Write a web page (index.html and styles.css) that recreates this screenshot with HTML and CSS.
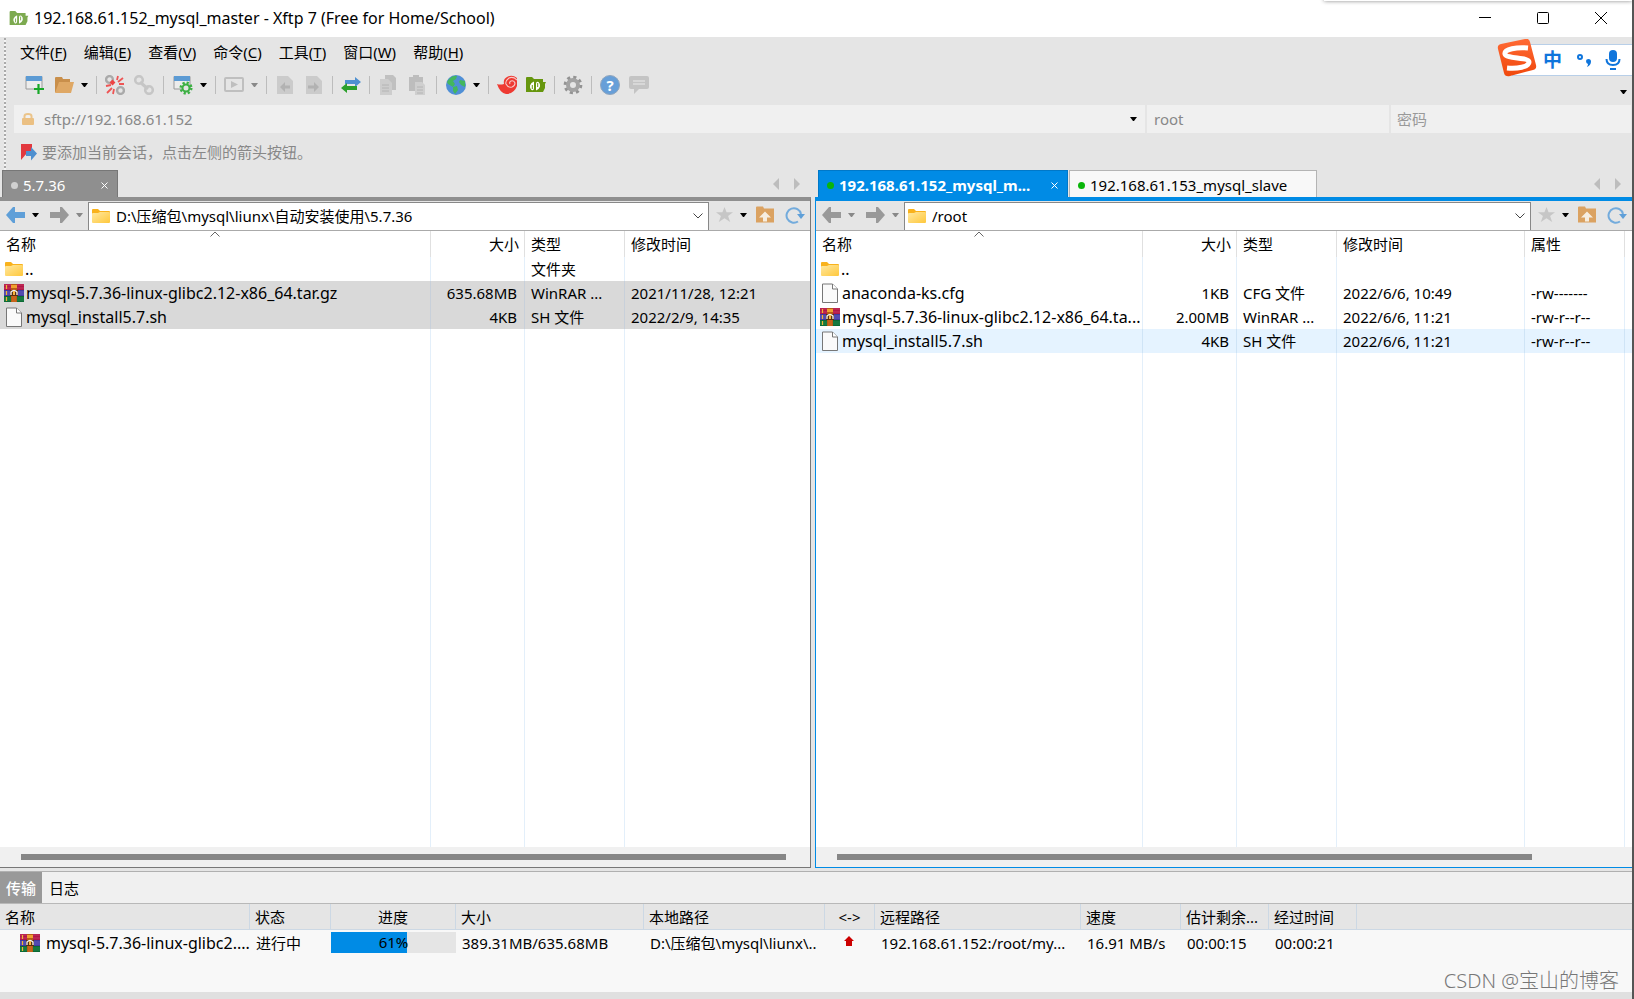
FILE: index.html
```html
<!DOCTYPE html>
<html lang="zh-CN">
<head>
<meta charset="utf-8">
<title>192.168.61.152_mysql_master - Xftp 7</title>
<link rel="stylesheet" href="styles.css">
</head>
<body>
<svg class="sprite" aria-hidden="true">
  <defs>
    <linearGradient id="gFolder" x1="0" y1="0" x2="1" y2="1"><stop offset="0" stop-color="#ffe8a0"/><stop offset="1" stop-color="#ffc83c"/></linearGradient>
    <linearGradient id="gOrange" x1="0" y1="0" x2="0" y2="1"><stop offset="0" stop-color="#ff6a35"/><stop offset="1" stop-color="#f0480c"/></linearGradient>
  </defs>
  <symbol id="caret" viewBox="0 0 7 4"><path d="M0 0h7L4 4H3z" fill="currentColor"/></symbol>
  <symbol id="folder" viewBox="0 0 18 14"><path d="M0 1q0-1 1-1h5l2 2h9q1 0 1 1v3H0z" fill="#f9b21c"/><path d="M0 5q0-1 1-1h5l2-1h9q1 0 1 1v9q0 1-1 1H1q-1 0-1-1z" fill="url(#gFolder)"/></symbol>
  <symbol id="file" viewBox="0 0 16 20"><path d="M.5 1h10l5 5v13.500H.5z" fill="#fafafa" stroke="#777"/><path d="M10.500 1v5h5" fill="#fff" stroke="#777"/></symbol>
  <symbol id="rar" viewBox="0 0 20 18">
    <rect width="20" height="6" fill="#b01848"/><rect y="6" width="20" height="6" fill="#4038a0"/><rect y="12" width="20" height="6" fill="#0c6a34"/>
    <path d="M0 1h20M0 4h20" stroke="#d84a70" stroke-width=".6"/><path d="M0 8h20M0 10h20" stroke="#7c78d8" stroke-width=".6"/><path d="M0 14h20M0 16h20" stroke="#2fa060" stroke-width=".6"/>
    <path d="M2.500 1v4M2.500 7v4M2.500 13v4" stroke="#f2b632" stroke-width="1.200"/>
    <path d="M7 0h6v18H7z" fill="#b85c14"/><path d="M7 1h6v3H7z" fill="#f0a030"/><path d="M8 12h4v6H8z" fill="#c8641c"/>
    <path d="M6 6h8v6H6z" fill="#5a3010"/><path d="M7 11V8q3-3 6 0v3" fill="none" stroke="#f4f4f4" stroke-width="1.300"/><path d="M9 7h2v4H9z" fill="#f8b840"/>
  </symbol>
  <symbol id="xftp" viewBox="0 0 20 16"><path d="M0 1q0-1 1-1h5l2 2h9v3h3l-1 2v4l-2 4H0z" fill="currentColor"/><path d="M8 4.500v6.500q0 3-2.500 2Q3.500 11 4 8.500 5 5.500 8 4.500zM10 13.500V7q0-3 2.500-2 2 1.500 1.500 4.500-1 3-4 4z" fill="#fff"/><path d="M6.300 8v4M11.700 6v4" stroke="currentColor"/></symbol>
  <symbol id="new" viewBox="0 0 20 20"><path d="M1 1.500h16V14H1z" fill="#ececec" stroke="#999"/><path d="M1 1h16v5H1z" fill="#5c9bd4"/><path d="M13.500 9v10M9 14h10" stroke="#18a828" stroke-width="2.200"/></symbol>
  <symbol id="open" viewBox="0 0 20 18"><path d="M1 2q0-1 1-1h6l1 2h7v3H6L3 16H1z" fill="#c98f4b"/><path d="M5 6h15l-3 11H1z" fill="#dfa865"/></symbol>
  <symbol id="link" viewBox="0 0 20 20"><circle cx="5" cy="5" r="3.800" fill="none" stroke="currentColor" stroke-width="2.600"/><circle cx="15" cy="15" r="3.800" fill="none" stroke="currentColor" stroke-width="2.600"/><path d="M6 7l8 7" stroke="currentColor" stroke-width="3"/></symbol>
  <symbol id="unlink" viewBox="0 0 20 20"><circle cx="4.500" cy="4.500" r="3.400" fill="none" stroke="#aaa" stroke-width="2.400"/><circle cx="15.500" cy="15.500" r="3.400" fill="none" stroke="#aaa" stroke-width="2.400"/><path d="M6 6l3 3" stroke="#e44" stroke-width="4"/><path d="M13 1l-1 4M18 3l-5 4M14 9h5M1 11l5-1M7 13l-5 5M9 14l-1 5" stroke="#ee5555" stroke-width="1.800"/></symbol>
  <symbol id="props" viewBox="0 0 20 20"><path d="M1 1.500h16V14H1z" fill="#ececec" stroke="#999"/><path d="M1 1h16v5H1z" fill="#5c9bd4"/><circle cx="13" cy="13" r="5.300" fill="none" stroke="#3cb043" stroke-width="2.500" stroke-dasharray="2.200 1.960"/><circle cx="13" cy="13" r="3.500" fill="#e5e5e5" stroke="#3cb043" stroke-width="2"/></symbol>
  <symbol id="play" viewBox="0 0 20 16"><rect x="1" y="1" width="18" height="13" rx="1" fill="none" stroke="#bfbfbf" stroke-width="2"/><path d="M7 4l7 3.500L7 11z" fill="#bfbfbf"/></symbol>
  <symbol id="docleft" viewBox="0 0 20 20"><path d="M2 1h11l5 5v13H2z" fill="#cbcbcb"/><path d="M10 7v3.500h5v3h-5V17l-5-5z" fill="#b2b2b2"/></symbol>
  <symbol id="docright" viewBox="0 0 20 20"><path d="M2 1h11l5 5v13H2z" fill="#cbcbcb"/><path d="M10 7v3.500H4v3h6V17l5-5z" fill="#b2b2b2"/></symbol>
  <symbol id="swap" viewBox="0 0 20 16"><path d="M4 3h10V0l6 5-6 5V7H4z" fill="#4f90d0"/><path d="M16 9H6V6l-6 5 6 5v-3h10z" fill="#2ba02b"/></symbol>
  <symbol id="copy" viewBox="0 0 20 20"><path d="M7 0h8l3 3v12H7z" fill="#c0c0c0"/><path d="M2 4h8l4 4v12H2z" fill="#cdcdcd"/><path d="M4 10h7M4 13h7M4 16h7" stroke="#b4b4b4"/></symbol>
  <symbol id="paste" viewBox="0 0 20 20"><path d="M2 2h4V0h6v2h4v14H2z" fill="#bdbdbd"/><path d="M8 7h7l3 3v10H8z" fill="#cfcfcf"/><path d="M10 12h6M10 15h6M10 18h6" stroke="#b4b4b4"/></symbol>
  <symbol id="globe" viewBox="0 0 20 20"><circle cx="10" cy="10" r="10" fill="#4f8fd6"/><path d="M3 4q4-4 8-3l-1 3-3 2 2 3-2 3-5-3-1-2zM14 5l5 1v6l-4-2-2-3zM7 12l4-1 1 4-3 4-2-3z" fill="#43b75e"/></symbol>
  <symbol id="swirl" viewBox="0 0 20 20"><path d="M0 9q3 1 7 0-1-5 3-7 5-3 10 1v8q-3 8-11 8-6-1-9-10z" fill="#ee3a32"/><path d="M20 5q-4-4-8-2-4 3-3 6 2 4 6 3 3-1 3-4-1-3-4-2-2 1-1 3" fill="none" stroke="#f6c9c6" stroke-width="1.100"/></symbol>
  <symbol id="gear" viewBox="0 0 20 20"><circle cx="10" cy="10" r="7.600" fill="none" stroke="#939393" stroke-width="3.500" stroke-dasharray="3 2.970"/><circle cx="10" cy="10" r="5" fill="none" stroke="#a3a3a3" stroke-width="4"/></symbol>
  <symbol id="chat" viewBox="0 0 20 20"><path d="M2 1h16q2 0 2 2v9q0 2-2 2h-8l-5 5v-5H2q-2 0-2-2V3q0-2 2-2z" fill="#c4c4c4"/><path d="M4 6h12M4 9h12" stroke="#dedede" stroke-width="1.500"/></symbol>
  <symbol id="lock" viewBox="0 0 12 12"><path d="M2.500 6V3q0-2 3.500-2t3.500 2v3" fill="none" stroke="#ebc48a" stroke-width="2"/><rect y="5" width="12" height="7" rx="1" fill="#ebc083"/></symbol>
  <symbol id="flag" viewBox="0 0 16 17"><path d="M0 0h11v11l-5-2-6 7z" fill="#e2393f"/><path d="M5 7h5V3l6 6.500-6 7V12H5z" fill="#4f90d0"/></symbol>
  <symbol id="back" viewBox="0 0 19 16"><path d="M9 0v5h10v6H9v5H7L0 8l7-8z" fill="currentColor"/></symbol>
  <symbol id="forward" viewBox="0 0 19 16"><path d="M10 0v5H0v6h10v5h2l7-8-7-8z" fill="currentColor"/></symbol>
  <symbol id="star" viewBox="0 0 18 16"><path d="M9 0l2.200 5.500H18L12.800 9.500 15 16 9 12l-6 4 2.200-6.500L0 5.500h6.800z" fill="#c6c6c6"/></symbol>
  <symbol id="upfolder" viewBox="0 0 18 16"><path d="M0 1q0-1 1-1h6l1 2h10v14H0z" fill="#dba261"/><path d="M9 5l6 6h-4v4H7v-4H3z" fill="#f6ede0"/></symbol>
  <symbol id="refresh" viewBox="0 0 20 18"><path d="M13 15.500A7.300 7.300 0 1 1 16 8" fill="none" stroke="#73abdc" stroke-width="2"/><path d="M12 8h8l-4 5z" fill="#5f9fd8"/></symbol>
  <symbol id="chevdown" viewBox="0 0 10 6"><path d="M.5.5L5 5 9.500.5" fill="none" stroke="#444"/></symbol>
  <symbol id="chevup" viewBox="0 0 10 6"><path d="M.5 5.500L5 1l4.500 4.500" fill="none" stroke="#666"/></symbol>
  <symbol id="cross" viewBox="0 0 7 7"><path d="M.5.500l6 6M6.500.5l-6 6" stroke="#fff"/></symbol>
  <symbol id="prev" viewBox="0 0 6 12"><path d="M6 0v12L0 6z" fill="#bdbdbd"/></symbol>
  <symbol id="next" viewBox="0 0 6 12"><path d="M0 0v12l6-6z" fill="#bdbdbd"/></symbol>
  <symbol id="upload" viewBox="0 0 10 10"><path d="M5 0l5 5H8v5H2V5H0z" fill="#cc0000"/></symbol>
  <symbol id="sogou" viewBox="0 0 40 38"><path d="M4 5L28 0q4-1 5 3l6 23q1 4-3 5L13 37q-5 1-6-3L1 10q-1-4 3-5z" fill="url(#gOrange)"/><path d="M31 9C20 8 7 10 8 15c1 5 24 3 24 8 0 5-12 7-22 6" fill="none" stroke="#fff" stroke-width="5"/></symbol>
  <symbol id="punct" viewBox="0 0 14 14"><circle cx="3" cy="4" r="2" fill="none" stroke="#0f75dc" stroke-width="2"/><path d="M9 8q0-2 2.500-2T14 8.500Q14 12 10 14q1-2 1-3-2-.5-2-3z" fill="#0f75dc"/></symbol>
  <symbol id="mic" viewBox="0 0 16 20"><rect x="4" width="8" height="12" rx="4" fill="#0f75dc"/><path d="M1.500 9q0 6 6.500 6t6.500-6M5 19h6" fill="none" stroke="#0f75dc" stroke-width="2"/></symbol>
</svg>

<div class="app">
  <header class="titlebar">
    <svg class="app-icon"><use href="#xftp"/></svg>
    <h1 class="title">192.168.61.152_mysql_master - Xftp 7 (Free for Home/School)</h1>
    <div class="win-buttons">
      <button class="win-btn" aria-label="最小化"><svg viewBox="0 0 12 12"><path d="M0 5.500h12" stroke="#000"/></svg></button>
      <button class="win-btn" aria-label="最大化"><svg viewBox="0 0 12 12"><rect x=".5" y=".5" width="11" height="11" rx="1" fill="none" stroke="#000"/></svg></button>
      <button class="win-btn" aria-label="关闭"><svg viewBox="0 0 12 12"><path d="M0 0l12 12M12 0L0 12" stroke="#000"/></svg></button>
    </div>
  </header>

  <section class="command-area">
    <div class="grip"></div>
    <div class="command-rows">
      <nav class="menu">
        <button>文件(<u>F</u>)</button><button>编辑(<u>E</u>)</button><button>查看(<u>V</u>)</button><button>命令(<u>C</u>)</button><button>工具(<u>T</u>)</button><button>窗口(<u>W</u>)</button><button>帮助(<u>H</u>)</button>
      </nav>
      <div class="toolbar">
        <button class="tool" aria-label="新建"><svg><use href="#new"/></svg></button>
        <button class="tool" aria-label="打开"><svg><use href="#open"/></svg></button>
        <button class="drop" aria-label="打开列表"><svg><use href="#caret"/></svg></button>
        <i class="sep"></i>
        <button class="tool" aria-label="断开"><svg><use href="#unlink"/></svg></button>
        <button class="tool pale" aria-label="重新连接"><svg><use href="#link"/></svg></button>
        <i class="sep wide"></i>
        <button class="tool" aria-label="属性"><svg><use href="#props"/></svg></button>
        <button class="drop" aria-label="属性列表"><svg><use href="#caret"/></svg></button>
        <i class="sep"></i>
        <button class="tool" aria-label="运行"><svg><use href="#play"/></svg></button>
        <button class="drop dim" aria-label="运行列表"><svg><use href="#caret"/></svg></button>
        <i class="sep"></i>
        <button class="tool" aria-label="向左传输"><svg><use href="#docleft"/></svg></button>
        <button class="tool" aria-label="向右传输"><svg><use href="#docright"/></svg></button>
        <i class="sep"></i>
        <button class="tool" aria-label="同步"><svg><use href="#swap"/></svg></button>
        <i class="sep"></i>
        <button class="tool" aria-label="复制"><svg><use href="#copy"/></svg></button>
        <button class="tool" aria-label="粘贴"><svg><use href="#paste"/></svg></button>
        <i class="sep wide"></i>
        <button class="tool" aria-label="编码"><svg><use href="#globe"/></svg></button>
        <button class="drop" aria-label="编码列表"><svg><use href="#caret"/></svg></button>
        <i class="sep"></i>
        <button class="tool" aria-label="Xshell"><svg><use href="#swirl"/></svg></button>
        <button class="tool green" aria-label="Xftp"><svg><use href="#xftp"/></svg></button>
        <i class="sep"></i>
        <button class="tool" aria-label="选项"><svg><use href="#gear"/></svg></button>
        <i class="sep"></i>
        <button class="tool help" aria-label="帮助">?</button>
        <button class="tool" aria-label="反馈"><svg><use href="#chat"/></svg></button>
        <button class="drop last" aria-label="更多"><svg><use href="#caret"/></svg></button>
      </div>
      <div class="address">
        <div class="field host">
          <svg class="lock"><use href="#lock"/></svg>
          <input type="text" aria-label="主机" value="sftp://192.168.61.152">
          <button class="drop" aria-label="主机列表"><svg><use href="#caret"/></svg></button>
        </div>
        <div class="field user"><input type="text" aria-label="用户名" value="root"></div>
        <div class="field pass"><input type="password" aria-label="密码" placeholder="密码"></div>
      </div>
      <div class="hint"><svg class="flag"><use href="#flag"/></svg><span>要添加当前会话，点击左侧的箭头按钮。</span></div>
    </div>
  </section>

  <main class="panes">
    <section class="pane local">
      <div class="tabs">
        <button class="tab current"><i class="dot"></i><span class="tab-name">5.7.36</span><svg class="close"><use href="#cross"/></svg></button>
        <div class="tab-nav"><button aria-label="上一个"><svg><use href="#prev"/></svg></button><button aria-label="下一个"><svg><use href="#next"/></svg></button></div>
      </div>
      <div class="pane-body">
        <div class="pathbar">
          <button class="nav blue" aria-label="后退"><svg><use href="#back"/></svg></button><button class="drop" aria-label="后退列表"><svg><use href="#caret"/></svg></button>
          <button class="nav fwd" aria-label="前进"><svg><use href="#forward"/></svg></button><button class="drop dim" aria-label="前进列表"><svg><use href="#caret"/></svg></button>
          <div class="path"><svg class="folder"><use href="#folder"/></svg><input type="text" aria-label="本地路径" value="D:\压缩包\mysql\liunx\自动安装使用\5.7.36"><button aria-label="路径列表"><svg class="chev"><use href="#chevdown"/></svg></button></div>
          <button class="side star" aria-label="收藏"><svg><use href="#star"/></svg></button><button class="drop" aria-label="收藏列表"><svg><use href="#caret"/></svg></button>
          <button class="side up" aria-label="上级目录"><svg><use href="#upfolder"/></svg></button>
          <button class="side refresh" aria-label="刷新"><svg><use href="#refresh"/></svg></button>
        </div>
        <div class="list">
          <table class="files">
            <colgroup><col class="w-name-local"><col class="w-size"><col class="w-type"><col></colgroup>
            <thead><tr><th>名称<svg class="sort"><use href="#chevup"/></svg></th><th class="num">大小</th><th>类型</th><th>修改时间</th></tr></thead>
            <tbody>
              <tr><td><div class="name"><svg class="folder"><use href="#folder"/></svg>..</div></td><td></td><td>文件夹</td><td></td></tr>
              <tr class="selected"><td><div class="name"><svg class="rar"><use href="#rar"/></svg>mysql-5.7.36-linux-glibc2.12-x86_64.tar.gz</div></td><td class="num">635.68MB</td><td>WinRAR ...</td><td>2021/11/28, 12:21</td></tr>
              <tr class="selected"><td><div class="name"><svg class="file"><use href="#file"/></svg>mysql_install5.7.sh</div></td><td class="num">4KB</td><td>SH 文件</td><td>2022/2/9, 14:35</td></tr>
              <tr class="rest"><td></td><td></td><td></td><td></td></tr>
            </tbody>
          </table>
        </div>
        <div class="scroll"><div class="thumb"></div></div>
      </div>
    </section>

    <section class="pane remote">
      <div class="tabs">
        <button class="tab current"><i class="dot"></i><span class="tab-name">192.168.61.152_mysql_m...</span><svg class="close"><use href="#cross"/></svg></button>
        <button class="tab"><i class="dot"></i><span class="tab-name">192.168.61.153_mysql_slave</span></button>
        <div class="tab-nav"><button aria-label="上一个"><svg><use href="#prev"/></svg></button><button aria-label="下一个"><svg><use href="#next"/></svg></button></div>
      </div>
      <div class="pane-body">
        <div class="pathbar">
          <button class="nav" aria-label="后退"><svg><use href="#back"/></svg></button><button class="drop dim" aria-label="后退列表"><svg><use href="#caret"/></svg></button>
          <button class="nav fwd" aria-label="前进"><svg><use href="#forward"/></svg></button><button class="drop dim" aria-label="前进列表"><svg><use href="#caret"/></svg></button>
          <div class="path"><svg class="folder"><use href="#folder"/></svg><input type="text" aria-label="远程路径" value="/root"><button aria-label="路径列表"><svg class="chev"><use href="#chevdown"/></svg></button></div>
          <button class="side star" aria-label="收藏"><svg><use href="#star"/></svg></button><button class="drop" aria-label="收藏列表"><svg><use href="#caret"/></svg></button>
          <button class="side up" aria-label="上级目录"><svg><use href="#upfolder"/></svg></button>
          <button class="side refresh" aria-label="刷新"><svg><use href="#refresh"/></svg></button>
        </div>
        <div class="list">
          <table class="files">
            <colgroup><col class="w-name-remote"><col class="w-size"><col class="w-type"><col class="w-time"><col class="w-type"><col></colgroup>
            <thead><tr><th>名称<svg class="sort"><use href="#chevup"/></svg></th><th class="num">大小</th><th>类型</th><th>修改时间</th><th>属性</th><th></th></tr></thead>
            <tbody>
              <tr><td><div class="name"><svg class="folder"><use href="#folder"/></svg>..</div></td><td></td><td></td><td></td><td></td><td></td></tr>
              <tr><td><div class="name"><svg class="file"><use href="#file"/></svg>anaconda-ks.cfg</div></td><td class="num">1KB</td><td>CFG 文件</td><td>2022/6/6, 10:49</td><td>-rw-------</td><td></td></tr>
              <tr><td><div class="name"><svg class="rar"><use href="#rar"/></svg>mysql-5.7.36-linux-glibc2.12-x86_64.ta...</div></td><td class="num">2.00MB</td><td>WinRAR ...</td><td>2022/6/6, 11:21</td><td>-rw-r--r--</td><td></td></tr>
              <tr class="hover"><td><div class="name"><svg class="file"><use href="#file"/></svg>mysql_install5.7.sh</div></td><td class="num">4KB</td><td>SH 文件</td><td>2022/6/6, 11:21</td><td>-rw-r--r--</td><td></td></tr>
              <tr class="rest"><td></td><td></td><td></td><td></td><td></td><td></td></tr>
            </tbody>
          </table>
        </div>
        <div class="scroll"><div class="thumb"></div></div>
      </div>
    </section>
  </main>

  <section class="transfers">
    <div class="dock-tabs"><button class="dock-tab current">传输</button><button class="dock-tab">日志</button></div>
    <table class="queue">
      <colgroup><col class="q-name"><col class="q-state"><col class="q-progress"><col class="q-size"><col class="q-local"><col class="q-dir"><col class="q-remote"><col class="q-speed"><col class="q-left"><col class="q-left"><col></colgroup>
      <thead><tr><th>名称</th><th>状态</th><th class="mid">进度</th><th>大小</th><th>本地路径</th><th class="mid">&lt;-&gt;</th><th>远程路径</th><th>速度</th><th>估计剩余...</th><th>经过时间</th><th class="end"></th></tr></thead>
      <tbody><tr>
        <td><div class="name job"><svg class="rar"><use href="#rar"/></svg>mysql-5.7.36-linux-glibc2....</div></td>
        <td>进行中</td>
        <td class="bar-cell"><div class="bar"><div class="fill" style="width:61%"></div><span class="percent">61%</span></div></td>
        <td>389.31MB/635.68MB</td><td>D:\压缩包\mysql\liunx\..</td>
        <td class="mid"><svg class="upload"><use href="#upload"/></svg></td>
        <td>192.168.61.152:/root/my...</td><td>16.91 MB/s</td><td>00:00:15</td><td>00:00:21</td><td></td>
      </tr></tbody>
    </table>
  </section>
  <footer class="status"></footer>

  <div class="top-shade"></div>
  <div class="ime"><svg class="sogou"><use href="#sogou"/></svg><span class="lang">中</span><svg class="punct"><use href="#punct"/></svg><svg class="mic"><use href="#mic"/></svg></div>
  <div class="watermark">CSDN @宝山的博客</div>
</div>
</body>
</html>
```
FILE: styles.css
```css
* { box-sizing: border-box; }
body, button, input, table {
  font-family: "Noto Sans", "Noto Sans CJK SC", sans-serif;
  font-size: 15px;
  line-height: 20px;
  color: #000;
}
body { margin: 0; overflow: hidden; }
button { border: 0; padding: 0; background: none; display: flex; align-items: center; flex: none; }
input { border: 0; padding: 0; background: none; min-width: 0; outline: none; }
svg { display: block; flex: none; }
.sprite { position: absolute; width: 0; height: 0; }

.app {
  position: relative;
  display: flex;
  flex-direction: column;
  height: 100vh;
  background: #e5e5e5;
  border-right: 2px solid #555;
  overflow: hidden;
}

/* title bar */
.titlebar { display: flex; align-items: center; height: 37px; flex: none; padding: 0 2px 1px 9px; background: #fff; }
.app-icon { width: 20px; height: 15px; color: #7daa50; }
.title { margin: 0 0 0 5px; font-size: 16px; font-weight: 400; flex: 1; }
.win-buttons { display: flex; }
.win-btn { width: 58px; height: 36px; justify-content: center; }
.win-btn svg { width: 12px; height: 12px; }

/* menu, tools, address */
.command-area { display: flex; height: 133px; flex: none; }
.grip { width: 2px; margin: 1px 8px 0 4px; background: repeating-linear-gradient(#aaa 0 2px, #f4f4f4 2px 4px); }
.command-rows { flex: 1; min-width: 0; }
.menu { display: flex; gap: 17px; height: 32px; padding: 0 0 2px 6px; }
.menu u { text-underline-offset: 2px; }
.toolbar { display: flex; align-items: center; height: 32px; padding-left: 11px; }
.tool svg { width: 20px; height: 20px; }
.tool + .tool { margin-left: 9px; }
.tool.pale { color: #c6c6c6; }
.tool.green { color: #66960e; }
.tool.green svg { height: 16px; }
.tool.help { width: 20px; height: 20px; justify-content: center; border-radius: 50%; background: #679fd8; border: 1px solid #8fa5bd; color: #fff; font-weight: 700; }
.drop { margin-left: 7px; }
.drop svg { width: 7px; height: 4px; }
.drop.dim { color: #888; }
.drop.last { margin: 14px 5px 0 auto; }
.sep { width: 1px; height: 18px; margin: 0 8px; background: #bcbcbc; }
.sep.wide { margin: 0 9px; }
.address { display: flex; gap: 2px; height: 28px; margin-top: 4px; padding-right: 1px; }
.field { display: flex; align-items: center; background: #f0f0f0; }
.field input { flex: 1; color: #888; }
.field input::placeholder { color: #999; opacity: 1; }
.host { flex: 1115; padding: 0 8px; }
.host input { margin-left: 10px; }
.lock { width: 12px; height: 12px; }
.user { flex: 235; padding-left: 7px; }
.pass { flex: 234; padding-left: 6px; }
.hint { display: flex; align-items: center; gap: 5px; height: 38px; padding-left: 7px; color: #888; }
.flag { width: 16px; height: 17px; }

/* file panes */
.panes { display: flex; flex: 1; min-height: 0; }
.pane { display: flex; flex-direction: column; min-width: 0; }
.local { flex: 811; margin-right: 4px; }
.remote { flex: 817; }
.tabs { display: flex; height: 27px; flex: none; padding-left: 2px; }
.remote .tabs { padding-left: 3px; gap: 1px; }
.tab { height: 27px; padding: 2px 9px 0 8px; background: #f8f8f8; border: 1px solid #b4b4b4; border-bottom: 0; }
.local .tab { width: 116px; background: #8f8f8f; border-color: #777; }
.remote .tab { width: 248px; }
.remote .tab.current { width: 250px; background: #008be5; border-color: #0078c8; }
.tab-name { margin-left: 5px; }
.tab.current .tab-name { color: #fff; }
.remote .current .tab-name { font-weight: 700; }
.dot { width: 7px; height: 7px; border-radius: 50%; background: #0ab50a; }
.local .dot { background: #d0d0d0; }
.close { width: 7px; height: 7px; margin-left: auto; }
.tab-nav { display: flex; gap: 15px; margin-left: auto; padding-right: 11px; }
.tab-nav svg { width: 6px; height: 12px; }
.pane-body { display: flex; flex-direction: column; flex: 1; min-height: 0; background: #fff; }
.local .pane-body { border: 1px solid #777; border-top: 4px solid #8f8f8f; border-left: 0; }
.remote .pane-body { border: 1px solid #008be5; border-top-width: 4px; border-right: 0; }
.pathbar { display: flex; align-items: center; height: 30px; flex: none; padding: 0 5px 2px 6px; background: #e5e5e5; border-bottom: 1px solid #aaa; }
.nav { color: #999; }
.nav.blue { color: #5f9fd8; }
.nav.fwd { margin-left: 11px; }
.nav svg { width: 19px; height: 16px; }
.path { display: flex; align-items: center; flex: 1; min-width: 0; height: 28px; margin: 2px 7px 0 5px; padding: 0 5px 0 3px; background: #fff; border: 1px solid #888; border-bottom: 0; }
.path input { flex: 1; margin: 0 6px; }
.chev { width: 10px; height: 6px; }
.folder { width: 18px; height: 14px; }
.side svg { width: 18px; height: 17px; }
.side.star svg { width: 17px; }
.side.refresh svg { width: 20px; height: 18px; }
.side.up { margin: 0 11px 0 9px; }

.list { flex: 1; min-height: 0; }
table { border-collapse: separate; border-spacing: 0; table-layout: fixed; width: 100%; }
th, td { padding: 0; text-align: left; font-weight: 400; white-space: nowrap; overflow: hidden; }
.files { height: 100%; }
.files th { position: relative; height: 26px; padding: 0 6px; border-right: 1px solid #e0e0e0; }
.files td { height: 24px; padding: 0 6px; border-right: 1px solid #e3effa; }
.files th:last-child, .files td:last-child { border-right: 0; }
.files td:first-child { padding-left: 3px; }
.files th.num { padding-right: 5px; text-align: right; }
.files td.num { padding-right: 7px; text-align: right; }
.files .rest td { height: auto; }
.selected td { background: #d9d9d9; border-right-color: #c8d0da; }
.hover td { background: #e5f3ff; border-right-color: #cfe4f6; }
.w-name-local { width: 431px; }
.w-name-remote { width: 327px; }
.w-size { width: 94px; }
.w-type { width: 100px; }
.w-time { width: 188px; }
.sort { position: absolute; top: 0; left: 50%; width: 10px; height: 6px; margin-left: -5px; }
.name { display: flex; align-items: center; gap: 2px; font-size: 16px; }
.rar { width: 20px; height: 18px; }
.files .rar { margin-left: 1px; }
.file { width: 16px; height: 20px; margin: 0 2px 0 3px; }
.files .folder { margin-left: 2px; }
.scroll { height: 20px; flex: none; padding: 7px 24px 7px 21px; background: #f0f0f0; }
.remote .scroll { padding-right: 100px; }
.thumb { height: 6px; background: #868686; }

/* transfer queue */
.transfers { flex: none; height: 121px; margin-top: 3px; background: #f8f8f8; border-top: 1px solid #b0b0b0; }
.dock-tabs { display: flex; height: 32px; background: #f0f0f0; border-bottom: 1px solid #b8b8b8; }
.dock-tab { padding: 0 6px; }
.dock-tab + .dock-tab { padding-left: 7px; }
.dock-tab.current { background: #999; color: #fff; font-weight: 500; }
.queue th { height: 26px; padding: 0 5px; background: #e5e5e5; border-right: 1px solid #ccd8e4; border-bottom: 1px solid #ccd8e4; }
.queue td { height: 25px; padding: 0 6px; }
.queue th.end { border-right: 0; }
.queue .mid { text-align: center; }
.queue .bar-cell, .queue td:first-child { padding: 0; }
.job { gap: 6px; padding-left: 20px; }
.bar { position: relative; height: 21px; background: #e5e5e5; }
.fill { height: 21px; background: #008be5; }
.percent { position: absolute; inset: 0; text-align: center; }
.upload { width: 10px; height: 10px; margin: 0 auto 4px 13px; }
.q-name { width: 250px; }
.q-state { width: 81px; }
.q-progress { width: 125px; }
.q-size { width: 188px; }
.q-local { width: 181px; }
.q-dir { width: 50px; }
.q-remote { width: 206px; }
.q-speed { width: 100px; }
.q-left { width: 88px; }
.status { height: 7px; flex: none; background: #e0e0e0; }

/* floating layers */
.top-shade { position: absolute; top: -4px; right: 0; width: 308px; height: 5px; box-shadow: 0 0 4px #888; }
.ime { position: absolute; top: 44px; right: -2px; display: flex; align-items: center; width: 122px; height: 32px; padding: 0 12px 0 30px; background: #fff; border: 1px solid #b8cfe8; }
.sogou { position: absolute; left: -16px; top: -6px; width: 40px; height: 38px; }
.lang { font-size: 19px; font-weight: 700; color: #0f75dc; }
.punct { width: 14px; height: 14px; margin: 0 auto; }
.mic { width: 16px; height: 20px; }
.watermark { position: absolute; right: 13px; bottom: 6px; font-size: 20px; font-weight: 300; line-height: 24px; color: #777; }
```
